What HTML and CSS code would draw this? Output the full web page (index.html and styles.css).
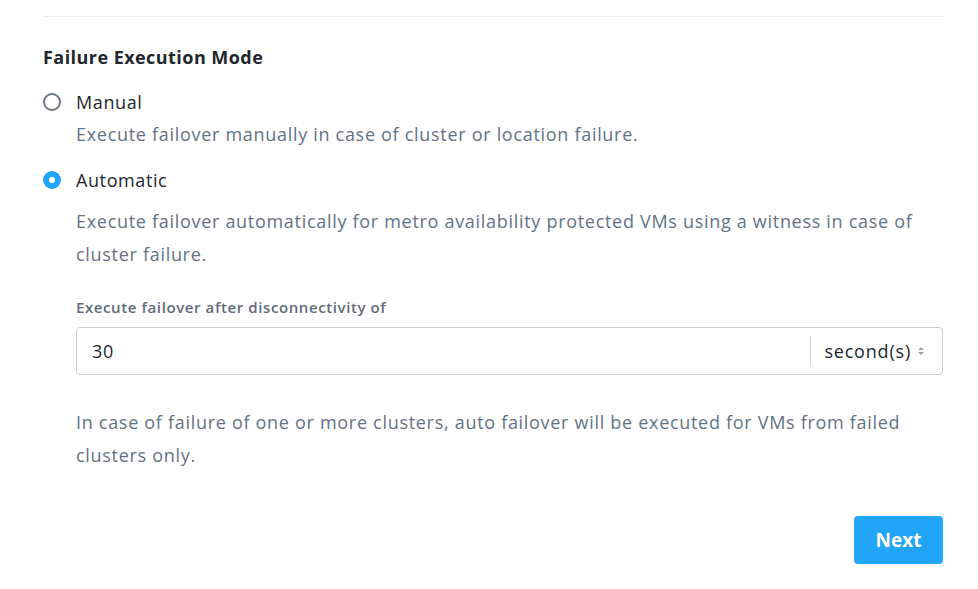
FILE: index.html
```html
<!DOCTYPE html>
<html>
<head>
<meta charset="utf-8">
<link rel="stylesheet" href="styles.css">
</head>
<body>
<div class="page">
  <div class="divider"></div>
  <h2 class="title">Failure Execution Mode</h2>
  <div class="option">
    <div class="opt-row">
      <span class="radio"></span>
      <span class="opt-label">Manual</span>
    </div>
    <p class="desc desc-first">Execute failover manually in case of cluster or location failure.</p>
  </div>
  <div class="option option-2">
    <div class="opt-row">
      <span class="radio checked"></span>
      <span class="opt-label">Automatic</span>
    </div>
    <div class="sub">
      <p class="desc desc-wide">Execute failover automatically for metro availability protected VMs using a witness in case of cluster failure.</p>
      <div class="field-label">Execute failover after disconnectivity of</div>
      <div class="input">
        <span class="value">30</span>
        <span class="sep"></span>
        <span class="unit">second(s)</span>
        <svg class="arrows" width="8" height="12" viewBox="0 0 8 12"><path d="M1 5 L4 2 L7 5 Z" fill="#98a2ae"/><path d="M1 7 L4 10 L7 7 Z" fill="#98a2ae"/></svg>
      </div>
      <p class="desc note">In case of failure of one or more clusters, auto failover will be executed for VMs from failed clusters only.</p>
    </div>
  </div>
  <div class="actions">
    <button class="btn">Next</button>
  </div>
</div>
</body>
</html>
```

FILE: styles.css
```css
* { box-sizing: border-box; }
html, body { margin: 0; padding: 0; background: #fff; }
body { font-family: "Open Sans", "Lato", sans-serif; color: #22272e; }
.page { padding: 16px 35px 0 43px; }
.divider { height: 1px; background: #eceef1; }
.title { margin: 28px 0 0; font-size: 18px; font-weight: 700; line-height: 24px; color: #22272e; letter-spacing: 0.45px; }
.option { margin-top: 21px; }
.option-2 { margin-top: 17px; }
.opt-row { display: flex; align-items: center; height: 24px; }
.radio { width: 18px; height: 18px; border-radius: 50%; border: 2px solid #6a7585; margin-right: 15px; flex: none; }
.radio.checked { border: 6px solid #22a5f7; background: #fff; }
.opt-label { font-size: 18px; line-height: 24px; letter-spacing: 0.6px; }
.desc { margin: 0; font-size: 18px; line-height: 33px; color: #627386; letter-spacing: 0.7px; }
.desc-first { padding-left: 33px; margin-top: 4px; }
.sub { padding-left: 33px; padding-right: 0; }
.desc-wide { margin-top: 13px; }
.field-label { margin-top: 26px; font-size: 15px; font-weight: 600; color: #5f6b7b; line-height: 20px; letter-spacing: 0.6px; }
.input { margin-top: 10px; height: 48px; border: 1px solid #c9ced6; border-radius: 4px; display: flex; align-items: center; padding: 0 17px 0 15px; }
.value { flex: 1; font-size: 18px; color: #22272e; letter-spacing: 0.7px; }
.sep { width: 1px; height: 30px; background: #d6dae0; margin-right: 13px; }
.unit { font-size: 18px; color: #22272e; letter-spacing: 0.8px; }
.arrows { margin-left: 6px; }
.note { margin-top: 31px; }
.actions { display: flex; justify-content: flex-end; margin-top: 44px; }
.btn { width: 89px; height: 48px; background: #22a5f7; color: #fff; border: none; border-radius: 4px; font-family: inherit; font-size: 19px; font-weight: 700; }
```
